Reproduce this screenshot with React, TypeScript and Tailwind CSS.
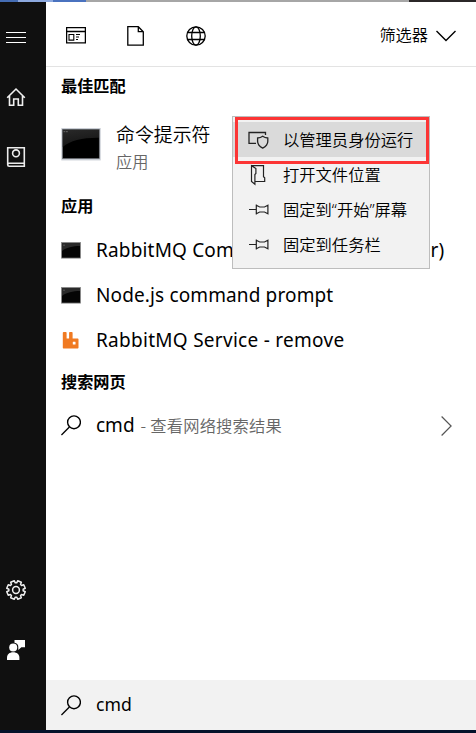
import type { ReactNode } from "react";

const FONT = "font-['Noto_Sans','Noto_Sans_CJK_SC',sans-serif]";
const CJK = "font-['Noto_Sans_CJK_SC',sans-serif]";

function HomeIcon() {
  return (
    <svg width="20" height="20" viewBox="0 0 20 20" fill="none" stroke="#f0f0f0" strokeWidth="1.6">
      <path d="M1.2 10.7 10 2l8.8 8.7M3.5 9v9.3h4.2V12h4.6v6.3h4.2V9" />
    </svg>
  );
}

function NotebookIcon() {
  return (
    <svg width="20" height="20" viewBox="0 0 20 20" fill="none" stroke="#ececec" strokeWidth="1.6">
      <path d="M1.7.8h16.6v18.4H3.2c-.9 0-1.5-.6-1.5-1.5zM1.7 17.5c0-.7.5-1.2 1.3-1.2h15.3" />
      <circle cx="10" cy="6.3" r="3.4" />
    </svg>
  );
}

function GearIcon() {
  const points: string[] = [];
  const teeth = 8;
  for (let i = 0; i < teeth; i++) {
    const center = (i * 2 * Math.PI) / teeth + Math.PI / 8;
    const corners: [number, number][] = [[-0.29, 7.2], [-0.21, 9.4], [0.21, 9.4], [0.29, 7.2]];
    corners.forEach(([offset, r]) => {
      points.push(`${10 + r * Math.cos(center + offset)},${10 + r * Math.sin(center + offset)}`);
    });
  }
  return (
    <svg width="20" height="20" viewBox="0 0 20 20" fill="none" stroke="#f0f0f0" strokeWidth="1.5" strokeLinejoin="round">
      <polygon points={points.join(" ")} />
      <circle cx="10" cy="10" r="3.4" />
    </svg>
  );
}

function FeedbackIcon() {
  return (
    <svg width="20" height="20" viewBox="0 0 20 20" fill="#fff">
      <path d="M8.5 0H19v7.2h-3.7L12.3 10V7.3C12.5 4.8 11 3 8.5 2.8z" />
      <circle cx="7.2" cy="7.6" r="4" />
      <path d="M1 20v-2.2C1 14.4 3.4 12.3 7.2 12.3s6.2 2.1 6.2 5.5V20z" />
    </svg>
  );
}

function SearchIcon() {
  return (
    <svg width="20" height="21" viewBox="0 0 20 21" fill="none" stroke="#000" strokeWidth="1.4" className="shrink-0">
      <circle cx="13" cy="7.3" r="6.4" />
      <path d="M8.4 12 .4 20" />
    </svg>
  );
}

function ConsoleIcon() {
  return (
    <svg width="20" height="17" viewBox="0 0 20 17">
      <rect x=".5" y=".5" width="19" height="15.6" fill="#050505" stroke="#8c8c8c" strokeWidth=".8" />
      <path d="M1 1h18v3C12 4 5 5.5 1 9z" fill="#2a2a2a" />
      <path d="M2 3.2h2" stroke="#777" strokeWidth=".6" />
    </svg>
  );
}

function LargeConsoleIcon() {
  return (
    <svg width="40" height="34" viewBox="0 0 40 34" className="shrink-0">
      <defs>
        <linearGradient id="shine" x1="0" y1="0" x2="0.3" y2="1">
          <stop offset="0" stopColor="#292929" />
          <stop offset="1" stopColor="#151515" />
        </linearGradient>
      </defs>
      <rect x=".3" y="1" width="39.4" height="32.4" fill="#c9cdd4" />
      <rect x="1.5" y="2.4" width="36.8" height="29.2" fill="#000" stroke="#70747a" strokeWidth=".7" />
      <path d="M1.8 2.7H38v8C22 10.5 9 13.5 1.800 20z" fill="url(#shine)" />
      <path d="M2.5 4.7h1.8M5 4.7h1.8" stroke="#777" strokeWidth=".8" />
    </svg>
  );
}

function RabbitIcon() {
  return (
    <svg width="20" height="18" viewBox="0 0 20 18">
      <path d="M2.7 0h2.2c.4 0 .7.3.7.7v5.7h2.500V.7c0-.4.3-.7.7-.7h2.1c.4 0 .7.3.7.7v5.7h4.9c.6 0 1 .4 1 1v8.2c0 .6-.4 1-1 1H2.7c-.5 0-.9-.4-.9-1V.8c0-.5.4-.8.9-.8z" fill="#f07a22" />
      <rect x="11.8" y="9.8" width="2.7" height="2.7" rx=".3" fill="#fff" />
    </svg>
  );
}

function RunAsAdminIcon() {
  return (
    <svg width="22" height="20" viewBox="0 0 22 20" fill="none" stroke="#222" strokeWidth="1.3">
      <path d="M17.5 5V2.500H1v10.800h7" />
      <path d="M14.700 6.200c1.600 1.200 3.200 1.700 5.100 1.800v3.300c0 3-1.700 5.100-5.100 6.800-3.400-1.700-5.100-3.800-5.100-6.800V8c1.900-.1 3.500-.6 5.100-1.800z" />
    </svg>
  );
}

function OpenLocationIcon() {
  return (
    <svg width="22" height="22" viewBox="0 0 22 22" fill="none" stroke="#222" strokeWidth="1.2">
      <path d="M3.500 1.700h12v11l1.200 1.100v3.700H7.300M3.500 1.700l4.400 2.800v5l-1 1v9.800l-3.400-2.900z" />
    </svg>
  );
}

function PinIcon() {
  return (
    <svg width="22" height="14" viewBox="0 0 22 14" fill="none" stroke="#222" strokeWidth="1.2">
      <path d="M1 6.500h7M8.300 1.500v10M8.300 2.300l3.400 1.700h4.800l3.400-1.700v8.400l-3.400-1.700h-4.800l-3.400 1.700" />
    </svg>
  );
}

function SectionHeading({ children }: { children: ReactNode }) {
  return <h2 className={`flex h-10 items-center pb-[3px] pl-[15px] text-[16.2px] font-bold leading-none ${CJK}`}>{children}</h2>;
}

function AppRow({ icon, name, tracking }: { icon: ReactNode; name: string; tracking: string }) {
  return (
    <li className="flex h-[45px] items-center pl-[15px]">
      <span className="w-[35px] shrink-0">{icon}</span>
      <span className={`whitespace-nowrap text-[19px] leading-none ${tracking}`}>{name}</span>
    </li>
  );
}

function MenuItem({ icon, label, active = false }: { icon: ReactNode; label: string; active?: boolean }) {
  return (
    <li className={`flex h-[35px] items-center pl-[15px] ${active ? "bg-[#dadada]" : ""}`}>
      <span className="w-[35px] shrink-0">{icon}</span>
      <span className="whitespace-nowrap pt-0.5 text-[16.3px] font-[350] leading-none">{label}</span>
    </li>
  );
}

export default function App() {
  return (
    <div className={`flex h-[733px] w-[476px] flex-col overflow-hidden bg-white text-black ${FONT}`}>
      <div className="flex h-0.5 shrink-0 bg-[#a6a6a6]">
        <div className="w-[18px] bg-[#456db4]" />
        <div className="w-[35px] bg-[#8da9df]" />
        <div className="w-[33px] bg-[#4a72bf]" />
        <div className="ml-auto w-[67px] bg-[#2b2728]" />
      </div>

      <div className="flex h-[728px] shrink-0">
        <nav className="flex w-[46px] shrink-0 flex-col items-start bg-[#101010] pl-1.5">
          <div className="mt-[30px] flex w-5 flex-col gap-1">
            <div className="h-px bg-white" />
            <div className="h-px bg-white" />
            <div className="h-px bg-white" />
          </div>
          <div className="mt-[44px]"><HomeIcon /></div>
          <div className="mt-10"><NotebookIcon /></div>
          <div className="mt-auto"><GearIcon /></div>
          <div className="mt-10 mb-[70px]"><FeedbackIcon /></div>
        </nav>

        <main className="relative flex w-[430px] flex-col">
          <header className="flex h-[65px] shrink-0 items-center border-b border-[#e3e3e3] pt-1 pl-5">
            <svg width="20" height="17" viewBox="0 0 20 17" fill="none" stroke="#000" strokeWidth="1.1" className="mb-px">
              <path d="M.6.6h18.8v15.3H.6zM.6 4.500h18.800" strokeWidth="1.3" />
              <path d="M3 7.500h4.800v5.600H3zM10 7.500h4M10 10h3M10 12.500h2" />
            </svg>
            <svg width="18" height="20" viewBox="0 0 18 20" fill="none" stroke="#000" strokeWidth="1.3" className="ml-[41px]">
              <path d="M.8.700h10.500l5 5v13.500H.8zM11.300.700v5h5" />
            </svg>
            <svg width="20" height="20" viewBox="0 0 20 20" fill="none" stroke="#000" strokeWidth="1.3" className="ml-[41px]">
              <circle cx="10" cy="10" r="9.2" />
              <ellipse cx="10" cy="10" rx="4.3" ry="9.2" />
              <path d="M1.500 6.500h17M1.500 13.500h17" />
            </svg>
            <button className="mr-5 ml-auto flex items-center gap-2">
              <span className={`pb-[3px] text-[16.2px] font-[350] leading-none ${CJK}`}>筛选器</span>
              <svg width="20" height="12" viewBox="0 0 20 12" fill="none" stroke="#000" strokeWidth="1.4">
                <path d="m.5 1 9.500 9.500L19.500 1" />
              </svg>
            </button>
          </header>

          <SectionHeading>最佳匹配</SectionHeading>
          <div className="flex h-20 pl-[15px]">
            <div className="mt-5 w-[55px]"><LargeConsoleIcon /></div>
            <div className={`flex flex-col font-[350] ${CJK}`}>
              <span className="mt-[17px] text-[18.9px] leading-5">命令提示符</span>
              <span className="mt-[7px] text-[16.2px] leading-5 text-[#666]">应用</span>
            </div>
          </div>
          <SectionHeading>应用</SectionHeading>
          <ul className="mt-px">
            <AppRow icon={<ConsoleIcon />} name="RabbitMQ Command Prompt (sbin dir)" tracking="tracking-[0.17px]" />
            <AppRow icon={<ConsoleIcon />} name="Node.js command prompt" tracking="tracking-[0.13px]" />
            <AppRow icon={<RabbitIcon />} name="RabbitMQ Service - remove" tracking="tracking-[0.28px]" />
          </ul>
          <SectionHeading>搜索网页</SectionHeading>
          <div className="flex h-[45px] items-center pr-[23px] pl-[15px]">
            <SearchIcon />
            <span className="ml-[15px] text-[19px] leading-none">cmd</span>
            <span className={`ml-[6px] text-[16.3px] font-[350] leading-none tracking-[0.2px] text-[#666] ${CJK}`}>- 查看网络搜索结果</span>
            <svg width="12" height="20" viewBox="0 0 12 20" fill="none" stroke="#555" strokeWidth="1.2" className="ml-auto">
              <path d="m.6.5 9.500 9.500L.6 19.500" />
            </svg>
          </div>

          <div className="mt-auto flex h-[50px] shrink-0 items-center bg-[#f2f2f2] pl-[15px]">
            <SearchIcon />
            <span className="ml-[15px] text-[17.6px] leading-none">cmd</span>
          </div>

          <div className="absolute top-[114px] left-[186px] h-[153px] w-[198px] border border-[#bdbdbd] bg-[#f2f2f2] pt-[5px]">
            <ul>
              <MenuItem icon={<RunAsAdminIcon />} label="以管理员身份运行" active />
              <MenuItem icon={<OpenLocationIcon />} label="打开文件位置" />
              <MenuItem icon={<PinIcon />} label="固定到“开始”屏幕" />
              <MenuItem icon={<PinIcon />} label="固定到任务栏" />
            </ul>
            <div className="absolute top-0 left-[2px] h-[47px] w-[194px] border-3 border-[#fc3535]" />
          </div>
        </main>
      </div>
      <div className="h-[3px] shrink-0 bg-[#03122a]" />
    </div>
  );
}
